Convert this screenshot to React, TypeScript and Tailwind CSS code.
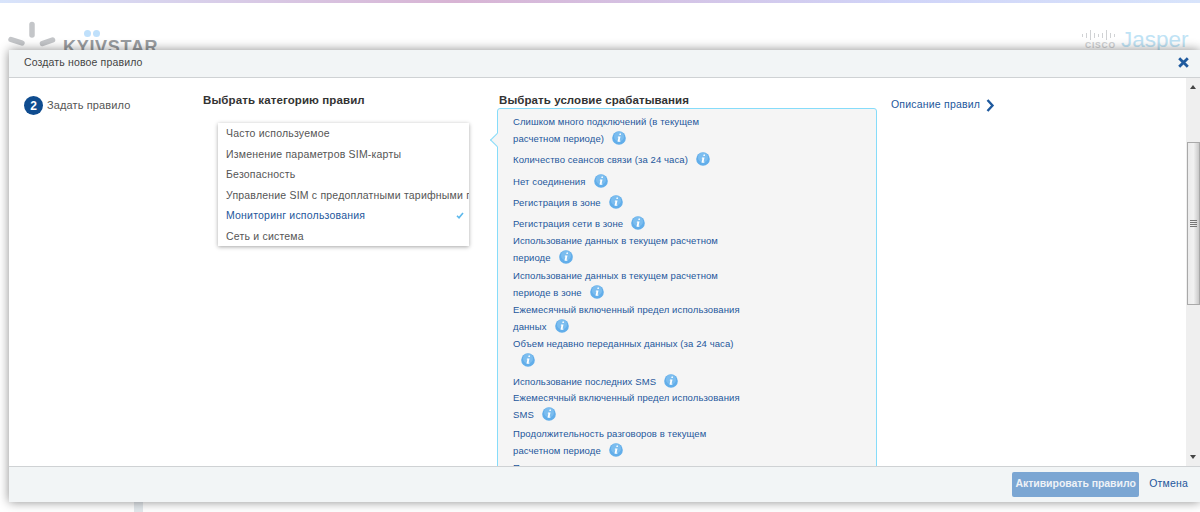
import React from "react";

const font = { fontFamily: '"Liberation Sans", Arial, sans-serif' };

function Info() {
  return (
    <svg width="14" height="14" viewBox="0 0 14 14" className="inline-block shrink-0">
      <circle cx="7" cy="7" r="6.8" fill="#62aeea" />
      <circle cx="7" cy="5.5" r="5" fill="#8cc6f2" opacity="0.6" />
      <path d="M7.6 2.6h1.5l-.3 1.5H7.3zM6 5.4h2.5l-.9 4.3h.9l-.2 1H5.5l.9-4.3h-.7z" fill="#fff" />
    </svg>
  );
}

function Cond({ a, b, mt }: { a: string; b?: string; mt: string }) {
  const twoLines = b !== undefined;
  const last = twoLines ? b : a;
  return (
    <div className={`${mt} w-[240px] text-[9.5px] leading-[17px] tracking-[0.1px] text-[#2b5f a3]`.replace("#2b5f a3", "#24579c")}>
      {twoLines ? <div className="whitespace-nowrap">{a}</div> : null}
      <div className="flex h-[17px] items-center gap-[8px] whitespace-nowrap">
        {last ? <span>{last}</span> : <span />}
        <Info />
      </div>
    </div>
  );
}

export default function App() {
  return (
    <div style={font} className="relative h-[512px] w-[1200px] overflow-hidden bg-white">
      <div className="h-[3px] bg-[linear-gradient(90deg,#d8e4fb,#d8b4d4_38%,#d0d4f8_75%,#d8e4fb)]" />
      {/* page behind the modal */}
      <svg className="absolute left-[8px] top-[20px]" width="50" height="30" viewBox="0 0 50 30">
        <g stroke="#c4c6c9" strokeWidth="5.5" strokeLinecap="round">
          <path d="M24 4.5V15" />
          <path d="M3 19.5l11 3.5" />
          <path d="M34.5 23.5l10-3.5" />
        </g>
      </svg>
      <div className="absolute left-[63px] top-[37px] text-[18px] font-bold leading-[20px] tracking-[0.7px] text-[#9a9da1]">KYIVSTAR</div>
      <div className="absolute left-[84px] top-[30px] flex gap-[2px]">
        <div className="h-[7px] w-[7px] rounded-full bg-[#bfe0fb]" />
        <div className="h-[7px] w-[7px] rounded-full bg-[#bfe0fb]" />
      </div>
      <div className="absolute left-[1082px] top-[30px] flex h-[10px] items-center gap-[3px]">
        {[3, 5, 10, 5, 3, 5, 10, 5, 3].map((h, i) => (
          <div key={i} style={{ height: h }} className="w-[1px] bg-[#d0d2d4]" />
        ))}
      </div>
      <div className="absolute left-[1085px] top-[41px] text-[8.5px] font-bold leading-[9px] tracking-[0.8px] text-[#cfd1d3]">CISCO</div>
      <div className="absolute left-[1121px] top-[27px] text-[22.5px] leading-[26px] text-[#bfe3f5]">Jasper</div>
      <div className="absolute bottom-0 left-[134px] h-[11px] w-[9px] bg-[#e3e8ec]" />

      {/* modal */}
      <div className="absolute left-[9px] top-[50px] flex h-[452px] w-[1191px] flex-col bg-white shadow-[0_0_10px_rgba(0,0,0,0.45)]">
        <div className="flex h-[28px] shrink-0 items-center justify-between border-b border-[#cfd2d4] bg-[#f2f5f6] pb-[2px] pl-[15px] pr-[11px] text-[10.5px] tracking-[0.15px] text-[#444]">
          <span>Создать новое правило</span>
          <svg width="11" height="11" viewBox="0 0 11 11" className="mb-[1px]">
            <path d="M1.2 1.2l8.6 8.6M9.8 1.2l-8.6 8.6" stroke="#1f5a9e" strokeWidth="2.8" />
          </svg>
        </div>
        <div className="flex min-h-0 flex-1">
          <div className="flex min-w-0 flex-1 overflow-hidden">
            <div className="flex w-[194px] shrink-0 items-start gap-[4px] pl-[15px] pt-[18px]">
              <div className="flex h-[19px] w-[19px] items-center justify-center rounded-full bg-[#0f4c8f] text-[12px] font-bold text-white">2</div>
              <span className="pt-[1px] text-[11px] tracking-[0.12px] text-[#555]">Задать правило</span>
            </div>
            <div className="w-[294px] shrink-0 pt-[14px]">
              <div className="text-[11.5px] font-bold tracking-[0.1px] text-[#333]">Выбрать категорию правил</div>
              <div className="ml-[15px] mt-[14px] w-[251px] overflow-hidden bg-white text-[10.5px] leading-[20.5px] tracking-[0.2px] text-[#555] shadow-[0_1px_4px_rgba(0,0,0,0.35)]">
                <div className="pl-[8px]">Часто используемое</div>
                <div className="pl-[8px]">Изменение параметров SIM-карты</div>
                <div className="pl-[8px]">Безопасность</div>
                <div className="h-[20.5px] w-[251px] overflow-hidden whitespace-nowrap pl-[8px]">Управление SIM с предоплатными тарифными п</div>
                <div className="flex items-center justify-between pl-[8px] pr-[5px] text-[#24579c]">
                  <span>Мониторинг использования</span>
                  <svg width="8" height="7" viewBox="0 0 8 7">
                    <path d="M1 3.8L3 5.8 7 1" fill="none" stroke="#5cb8ec" strokeWidth="1.6" />
                  </svg>
                </div>
                <div className="pl-[8px]">Сеть и система</div>
              </div>
            </div>
            <div className="w-[394px] shrink-0 pt-[14px]">
              <div className="pl-[2px] text-[11.5px] font-bold tracking-[0.08px] text-[#333]">Выбрать условие срабатывания</div>
              <div className="relative mt-[-1px] h-[500px] w-[380px] rounded-[3px] border border-[#86dcfa] bg-[#f5f5f5] pl-[15px] pt-[3.5px]">
                <div className="absolute left-[-6px] top-[26px] h-[10px] w-[10px] rotate-45 border-b border-l border-[#86dcfa] bg-[#f5f5f5]" />
                <Cond a="Слишком много подключений (в текущем" b="расчетном периоде)" mt="mt-0" />
                <Cond a="Количество сеансов связи (за 24 часа)" mt="mt-[4px]" />
                <Cond a="Нет соединения" mt="mt-[5px]" />
                <Cond a="Регистрация в зоне" mt="mt-[4px]" />
                <Cond a="Регистрация сети в зоне" mt="mt-[4px]" />
                <Cond a="Использование данных в текущем расчетном" b="периоде" mt="mt-0" />
                <Cond a="Использование данных в текущем расчетном" b="периоде в зоне" mt="mt-[1px]" />
                <Cond a="Ежемесячный включенный предел использования" b="данных" mt="mt-0" />
                <Cond a="Объем недавно переданных данных (за 24 часа)" b="" mt="mt-0" />
                <Cond a="Использование последних SMS" mt="mt-[4px]" />
                <Cond a="Ежемесячный включенный предел использования" b="SMS" mt="mt-[-1px]" />
                <Cond a="Продолжительность разговоров в текущем" b="расчетном периоде" mt="mt-[2px]" />
                <Cond a="Продолжительность разговоров в текущем" b="расчетном периоде в зоне" mt="mt-0" />
              </div>
            </div>
            <div className="flex h-[14px] items-center gap-[6px] pt-[27px] text-[10.5px] tracking-[0.2px] text-[#24579c]">
              <span className="whitespace-nowrap">Описание правил</span>
              <svg width="9" height="13" viewBox="0 0 9 13">
                <path d="M1.5 1l5 5.5-5 5.5" fill="none" stroke="#1f5a9e" strokeWidth="2.4" />
              </svg>
            </div>
          </div>
          {/* scrollbar */}
          <div className="flex w-[14px] shrink-0 flex-col items-center bg-[#efefef]">
            <div className="mt-[7px] h-0 w-0 border-x-[3px] border-b-[4px] border-x-transparent border-b-[#444]" />
            <div className="mt-[53px] flex h-[163px] w-[13px] flex-col items-center justify-center gap-[1px] border border-[#a9a9a9] bg-gradient-to-r from-[#ececec] via-[#f1f1f1] to-[#c9c9c9]">
              <div className="h-[1px] w-[7px] bg-[#777]" />
              <div className="h-[1px] w-[7px] bg-[#777]" />
              <div className="h-[1px] w-[7px] bg-[#777]" />
              <div className="h-[1px] w-[7px] bg-[#777]" />
            </div>
            <div className="mb-[7px] mt-auto h-0 w-0 border-x-[3px] border-t-[4px] border-x-transparent border-t-[#444]" />
          </div>
        </div>
        <div className="flex h-[36px] shrink-0 items-center justify-end gap-[10px] border-t border-[#cfd2d4] bg-[#f2f5f6] pb-[1px] pr-[12px]">
          <button className="h-[25px] w-[127px] rounded-[2px] bg-[#7ba6d3] text-[10.5px] font-bold tracking-[-0.05px] text-[#eef2f7]">Активировать правило</button>
          <span className="text-[10.5px] tracking-[0.2px] text-[#24579c]">Отмена</span>
        </div>
      </div>
    </div>
  );
}
